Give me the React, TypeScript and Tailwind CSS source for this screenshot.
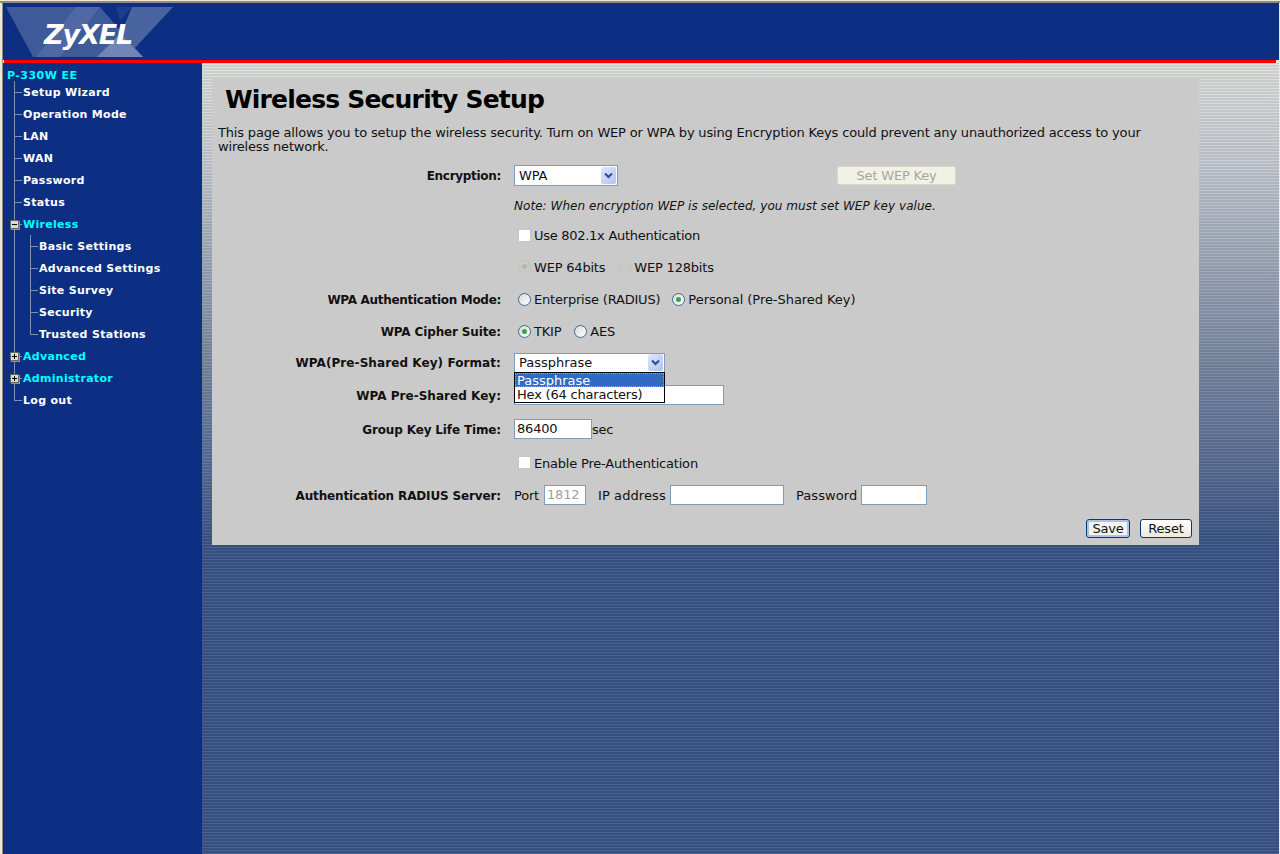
import React from "react";

const nav = [
  { label: "Setup Wizard", level: 0 },
  { label: "Operation Mode", level: 0 },
  { label: "LAN", level: 0 },
  { label: "WAN", level: 0 },
  { label: "Password", level: 0 },
  { label: "Status", level: 0 },
  { label: "Wireless", level: 0, box: "minus" },
  { label: "Basic Settings", level: 1 },
  { label: "Advanced Settings", level: 1 },
  { label: "Site Survey", level: 1 },
  { label: "Security", level: 1 },
  { label: "Trusted Stations", level: 1 },
  { label: "Advanced", level: 0, box: "plus" },
  { label: "Administrator", level: 0, box: "plus" },
  { label: "Log out", level: 0 },
];

const Radio = ({ on }: { on?: boolean }) => (
  <span className="flex h-[13px] w-[13px] shrink-0 items-center justify-center rounded-full border border-[#3f6a96] bg-[linear-gradient(135deg,#d8d8d4,#ffffff)]">
    {on && <span className="h-[5px] w-[5px] rounded-full bg-[#2fa84a]" />}
  </span>
);

const Check = () => (
  <span className="mr-[3px] ml-[4px] h-[13px] w-[13px] shrink-0 border border-[#c9c7ba] bg-white" />
);

const Arrow = () => (
  <span className="flex h-[17px] w-[15px] items-center justify-center rounded-[2px] bg-[linear-gradient(135deg,#dfe8fb,#b0c4f2)]">
    <svg width="9" height="7" viewBox="0 0 9 7">
      <path d="M1 1.5 L4.5 5 L8 1.5" fill="none" stroke="#2f4a86" strokeWidth="2" />
    </svg>
  </span>
);

// text sits one pixel under the centre of the controls next to it
const T = ({ className = "", children }: { className?: string; children: React.ReactNode }) => (
  <span className={`pt-[2px] ${className}`}>{children}</span>
);

const Row = ({
  label,
  h,
  labelClass = "tracking-[-0.14px] pt-[2px]",
  children,
}: {
  label?: string;
  h: string;
  labelClass?: string;
  children: React.ReactNode;
}) => (
  <div className={`flex items-center ${h}`}>
    <div className={`w-[289px] shrink-0 text-right text-[12px] font-bold ${labelClass}`}>{label}</div>
    <div className="ml-[13px] flex items-center">{children}</div>
  </div>
);

const Field = ({ className, children }: { className: string; children?: React.ReactNode }) => (
  <span className={`flex h-[20px] items-center border border-[#7f9db9] bg-white pl-[2px] ${className}`}>
    {children}
  </span>
);

export default function App() {
  return (
    <div className="h-[854px] w-[1280px] overflow-hidden bg-[#ece9d8] font-['DejaVu_Sans','Liberation_Sans',sans-serif] text-[13px] text-[#111]">
      <div className="h-[1px] bg-[#ece9d8]" />
      <div className="h-[2px] bg-[#8f8b7e]" />
      <div className="ml-[2px] mr-[1px] flex h-[851px] flex-col border-l border-[#8f8b7e]">
        <header className="relative h-[57px] shrink-0 overflow-hidden bg-[#0c2f84]">
          <svg className="absolute top-0 left-0" width="175" height="57" viewBox="3 3 175 57">
            <path d="M6 7 H100 L143 57 H33 Z" fill="#3f5a98" />
            <path d="M76 7 H100 L60 57 H36 Z" fill="#5068a4" />
            <path d="M132 7 H173 L133 50 L120 36 Z" fill="#4a64a0" />
            <path d="M116 7 H132 L120 21 Z" fill="#1c3c8c" />
            <path d="M97 57 L120 34 L143 57 Z" fill="#7186b5" />
          </svg>
          <span className="absolute top-[16px] left-[41px] text-[27px] leading-[32px] font-bold tracking-[-1.1px] text-white italic">
            ZyXEL
          </span>
        </header>
        <div className="mr-[3px] ml-[1px] h-[3px] shrink-0 bg-[#ff0000]" />
        <div className="flex min-h-0 flex-1">
          <aside className="relative w-[199px] shrink-0 bg-[#0c2f84] pt-[6px] text-[11px] leading-[22px] font-bold tracking-[0.3px] text-white">
            <div className="ml-[4px] h-[14px] leading-[14px] tracking-[0.45px] text-[#00ffff]">P-330W EE</div>
            <div className="absolute top-[18px] left-[11px] h-[319px] w-px bg-[#7f8fb8]" />
            <div className="absolute top-[172px] left-[27px] h-[99px] w-px bg-[#7f8fb8]" />
            <ul className="relative -mt-[1px]">
              {nav.map((n) => (
                <li
                  key={n.label}
                  className={`relative flex h-[22px] items-center ${n.level ? "pl-[36px]" : "pl-[20px]"} ${
                    n.box ? "text-[#00ffff]" : ""
                  }`}
                >
                  <span
                    className={`absolute top-[10px] h-px bg-[#7f8fb8] ${
                      n.level ? "left-[27px] w-[8px]" : "left-[11px] w-[8px]"
                    }`}
                  />
                  {n.box && (
                    <span className="absolute top-[6px] left-[7px] flex h-[9px] w-[9px] items-center justify-center border border-[#666] bg-[#d8d8d8] shadow-[1px_1px_0_#8a93ad]">
                      <span className="relative block h-px w-[5px] bg-black">
                        {n.box === "plus" && <span className="absolute -top-[2px] left-[2px] h-[5px] w-px bg-black" />}
                      </span>
                    </span>
                  )}
                  <span className="relative">{n.label}</span>
                </li>
              ))}
            </ul>
          </aside>
          <main className="flex-1 bg-[repeating-linear-gradient(0deg,rgba(255,255,255,0.06)_0px,rgba(255,255,255,0.06)_1px,rgba(0,0,0,0.08)_1px,rgba(0,0,0,0.08)_3px),linear-gradient(180deg,#dfe1de_0px,#c8ccd4_97px,#a0aabb_197px,#7a89a3_297px,#5b7096_397px,#3c5688_480px)] pt-[16px] pl-[10px]">
            <section className="w-[987px] bg-[#cacaca] text-[13px] leading-[14px] tracking-[-0.2px]">
              <h1 className="h-[46px] pt-[5px] pl-[13px] text-[25px] leading-[32px] font-bold tracking-[-0.8px] text-black">
                Wireless Security Setup
              </h1>
              <p className="h-[36px] w-[950px] pt-px pl-[6px] tracking-[-0.175px]">
                This page allows you to setup the wireless security. Turn on WEP or WPA by using Encryption Keys could
                prevent any unauthorized access to your wireless network.
              </p>
              <div className="relative">
                <Row label="Encryption:" h="h-[29px]" labelClass="tracking-[-0.3px]">
                  <span className="flex h-[21px] w-[104px] items-center justify-between border border-[#7f9db9] bg-white pr-px pl-[4px]">
                    WPA
                    <Arrow />
                  </span>
                  <span className="ml-[219px] flex h-[19px] w-[119px] items-center justify-center rounded-[2px] border border-[#d8d6c8] bg-[#f2f1e6] text-[#a8a69a]">
                    Set WEP Key
                  </span>
                </Row>
                <Row h="h-[30px]">
                  <T className="text-[12px] tracking-[0.04px] italic">
                    Note: When encryption WEP is selected, you must set WEP key value.
                  </T>
                </Row>
                <Row h="h-[30px]">
                  <Check />
                  <T className="tracking-[-0.28px]">Use 802.1x Authentication</T>
                </Row>
                <Row h="h-[33px]">
                  <span className="mr-[3px] ml-[4px] flex h-[13px] w-[13px] items-center justify-center rounded-full border border-[#c4c2b8]">
                    <span className="h-[5px] w-[5px] rounded-full bg-[#b8b6aa]" />
                  </span>
                  <T>WEP 64bits</T>
                  <span className="mr-[3px] ml-[13px] h-[13px] w-[13px] rounded-full border border-[#c4c2b8]" />
                  <T>WEP 128bits</T>
                </Row>
                <Row label="WPA Authentication Mode:" h="h-[32px]" labelClass="tracking-[-0.3px] pt-[2px]">
                  <span className="mr-[3px] ml-[4px]">
                    <Radio />
                  </span>
                  <T>Enterprise (RADIUS)</T>
                  <span className="mr-[3px] ml-[12px]">
                    <Radio on />
                  </span>
                  <T className="tracking-[-0.05px]">Personal (Pre-Shared Key)</T>
                </Row>
                <Row label="WPA Cipher Suite:" h="h-[32px]">
                  <span className="mr-[3px] ml-[4px]">
                    <Radio on />
                  </span>
                  <T>TKIP</T>
                  <span className="mr-[3px] ml-[13px]">
                    <Radio />
                  </span>
                  <T>AES</T>
                </Row>
                <Row label="WPA(Pre-Shared Key) Format:" h="h-[31px]" labelClass="tracking-[0.08px]">
                  <span className="flex h-[20px] w-[151px] items-center justify-between border border-[#7f9db9] bg-white pr-px pl-[4px] tracking-[0px]">
                    Passphrase
                    <Arrow />
                  </span>
                </Row>
                <Row label="WPA Pre-Shared Key:" h="h-[34px]" labelClass="tracking-[0.03px] pt-[2px]">
                  <Field className="w-[210px]" />
                </Row>
                <Row label="Group Key Life Time:" h="h-[34px]">
                  <Field className="w-[78px]">86400</Field>
                  <T>sec</T>
                </Row>
                <Row h="h-[33px]">
                  <Check />
                  <T>Enable Pre-Authentication</T>
                </Row>
                <Row label="Authentication RADIUS Server:" h="h-[32px]">
                  <T>Port</T>
                  <Field className="ml-[5px] w-[42px] text-[#a0a0a0]">1812</Field>
                  <T className="ml-[12px] tracking-[0.1px]">IP address</T>
                  <Field className="ml-[4px] w-[114px]" />
                  <T className="ml-[12px] tracking-[0.1px]">Password</T>
                  <Field className="ml-[4px] w-[66px]" />
                </Row>
                <div className="flex h-[34px] items-start justify-end gap-[10px] pt-[8px] pr-[7px]">
                  <button className="h-[19px] w-[44px] rounded-[3px] border border-[#003c74] bg-[#f4f4ee] shadow-[inset_0_0_0_2px_#a9c3ee]">
                    Save
                  </button>
                  <button className="h-[19px] w-[52px] rounded-[3px] border border-[#003c74] bg-[linear-gradient(180deg,#ffffff,#ece9dc)]">
                    Reset
                  </button>
                </div>
                <ul className="absolute top-[211px] left-[302px] h-[31px] w-[151px] border border-black bg-white leading-[14px]">
                  <li className="h-[14px] bg-[#316ac5] pt-px pl-[2px] tracking-[0px] text-white outline-1 -outline-offset-1 outline-[#e0a040] outline-dotted">Passphrase</li>
                  <li className="pt-px pl-[2px]">Hex (64 characters)</li>
                </ul>
              </div>
            </section>
          </main>
        </div>
      </div>
    </div>
  );
}
